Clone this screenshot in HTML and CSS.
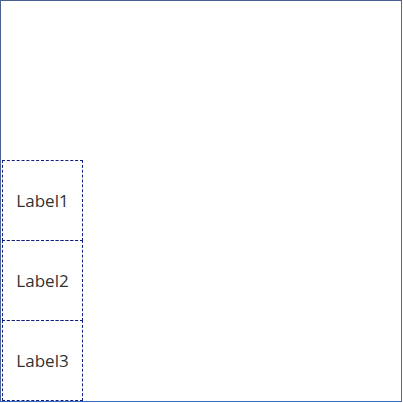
FILE: index.html
```html
<!DOCTYPE html>
<html>
<head>
<meta charset="utf-8">
<link rel="stylesheet" href="styles.css">
</head>
<body>
<div class="screen">
  <div class="stack">
    <div class="label">Label1</div>
    <div class="label">Label2</div>
    <div class="label">Label3</div>
  </div>
</div>
</body>
</html>
```
FILE: styles.css
```css
html, body {
  margin: 0;
  padding: 0;
  background: #ffffff;
}
.screen {
  box-sizing: border-box;
  width: 402px;
  height: 402px;
  border: 1px solid #4a5f92;
  border-right-color: #3a6bc6;
  border-bottom-color: #3a6bc6;
  display: flex;
  flex-direction: column;
  justify-content: flex-end;
  padding: 0 0 0 1px;
}
.stack {
  display: flex;
  flex-direction: column;
}
.label {
  box-sizing: border-box;
  width: 81px;
  height: 81px;
  margin-top: -1px;
  border: 1px dashed #102080;
  display: flex;
  align-items: center;
  justify-content: center;
  padding-bottom: 1px;
  font-family: "Open Sans", "Noto Sans", sans-serif;
  font-size: 17px;
  color: #333333;
}
```
